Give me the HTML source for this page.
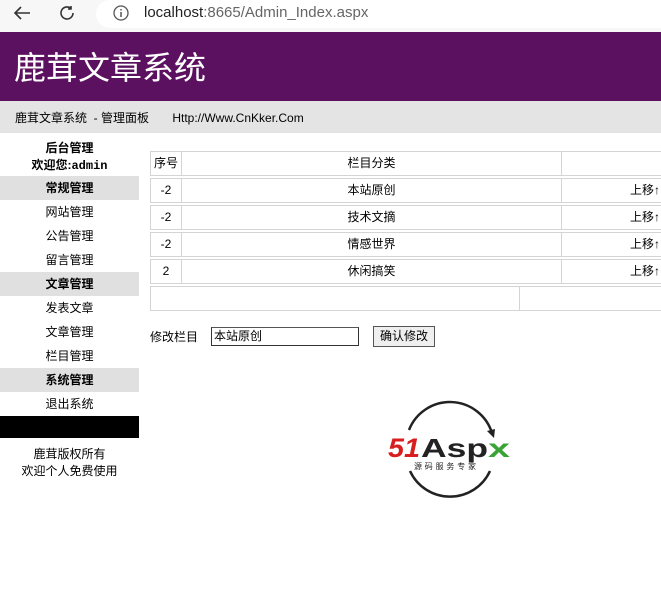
<!DOCTYPE html>
<html><head><meta charset="utf-8"><style>
*{margin:0;padding:0;box-sizing:border-box}
body{width:661px;height:609px;overflow:hidden;background:#fff;font-family:"Liberation Sans","Noto Sans CJK SC",sans-serif;font-size:12px;color:#000;position:relative}
.a{position:absolute}
.cell{position:absolute;border:1px solid #d4d4d4;height:25px;line-height:23px}
.sb{position:absolute;left:0;width:139px;text-align:center;height:24px;line-height:24px}
.g{background:#e0e0e0;font-weight:bold}
</style></head><body>
<div class="a" style="left:0;top:0;width:661px;height:32px;background:#f7f7f7"></div>
<div class="a" style="left:96px;top:0;width:565px;height:28px;background:#fff;border-radius:14px 0 0 14px"></div>
<svg class="a" style="left:12px;top:4px" width="20" height="18"><path d="M18 9H3M9 3L3 9l6 6" stroke="#333" stroke-width="1.6" fill="none"/></svg>
<svg class="a" style="left:58px;top:4px" width="18" height="18"><path d="M15 9a6 6 0 1 1-2-4.5M13 2v3h-3" stroke="#333" stroke-width="1.6" fill="none"/></svg>
<svg class="a" style="left:112px;top:4px" width="18" height="18"><circle cx="9" cy="9" r="7" stroke="#555" stroke-width="1.3" fill="none"/><path d="M9 8v5M9 5v1.5" stroke="#555" stroke-width="1.5"/></svg>
<div class="a" style="left:144px;top:4px;font-size:15px;color:#222">localhost<span style="color:#666">:8665/Admin_Index.aspx</span></div>
<div class="a" style="left:0;top:32px;width:661px;height:69px;background:#5c1160"></div>
<div class="a" style="left:14px;top:49px;font-size:32px;color:#fff;line-height:38px">鹿茸文章系统</div>
<div class="a" style="left:0;top:101px;width:661px;height:32px;background:#e4e4e4"></div>
<div class="a" style="left:15px;top:109px;font-size:12px">鹿茸文章系统 &nbsp;- 管理面板 &nbsp; &nbsp; &nbsp; Http://Www.CnKker.Com</div>

<div class="sb" style="top:138px;height:20px;line-height:20px;font-weight:bold">后台管理</div>
<div class="sb" style="top:155px;height:20px;line-height:20px;font-weight:bold">欢迎您:<span style="font-family:'Liberation Mono',monospace">admin</span></div>
<div class="sb g" style="top:176px">常规管理</div>
<div class="sb" style="top:200px">网站管理</div>
<div class="sb" style="top:224px">公告管理</div>
<div class="sb" style="top:248px">留言管理</div>
<div class="sb g" style="top:272px">文章管理</div>
<div class="sb" style="top:296px">发表文章</div>
<div class="sb" style="top:320px">文章管理</div>
<div class="sb" style="top:344px">栏目管理</div>
<div class="sb g" style="top:368px">系统管理</div>
<div class="sb" style="top:392px">退出系统</div>
<div class="a" style="left:0;top:416px;width:139px;height:22px;background:#000"></div>
<div class="sb" style="top:446px;height:17px;line-height:17px">鹿茸版权所有</div>
<div class="sb" style="top:463px;height:17px;line-height:17px">欢迎个人免费使用</div>

<div class="cell" style="left:150px;top:151px;width:32px;text-align:center">序号</div>
<div class="cell" style="left:181px;top:151px;width:381px;text-align:center">栏目分类</div>
<div class="cell" style="left:561px;top:151px;width:110px"></div>

<div class="cell" style="left:150px;top:178px;width:32px;text-align:center">-2</div>
<div class="cell" style="left:181px;top:178px;width:381px;text-align:center">本站原创</div>
<div class="cell" style="left:561px;top:178px;width:110px;text-align:right;padding-right:10px">上移↑</div>
<div class="cell" style="left:150px;top:205px;width:32px;text-align:center">-2</div>
<div class="cell" style="left:181px;top:205px;width:381px;text-align:center">技术文摘</div>
<div class="cell" style="left:561px;top:205px;width:110px;text-align:right;padding-right:10px">上移↑</div>
<div class="cell" style="left:150px;top:232px;width:32px;text-align:center">-2</div>
<div class="cell" style="left:181px;top:232px;width:381px;text-align:center">情感世界</div>
<div class="cell" style="left:561px;top:232px;width:110px;text-align:right;padding-right:10px">上移↑</div>
<div class="cell" style="left:150px;top:259px;width:32px;text-align:center">2</div>
<div class="cell" style="left:181px;top:259px;width:381px;text-align:center">休闲搞笑</div>
<div class="cell" style="left:561px;top:259px;width:110px;text-align:right;padding-right:10px">上移↑</div>
<div class="cell" style="left:150px;top:286px;width:370px;height:25px"></div>
<div class="cell" style="left:519px;top:286px;width:152px;height:25px"></div>

<div class="a" style="left:150px;top:328px">修改栏目</div>
<div class="a" style="left:211px;top:327px;width:148px;height:19px;border:1px solid #333;border-top-color:#555;padding-left:2px;line-height:17px">本站原创</div>
<div class="a" style="left:373px;top:326px;width:62px;height:21px;border:1px solid #555;background:#efefef;text-align:center;line-height:19px">确认修改</div>

<svg class="a" style="left:380px;top:395px" width="140" height="105">
<path d="M29 35 A44 44 0 0 1 112 38" stroke="#222" stroke-width="2.5" fill="none"/>
<path d="M107 36 l7 7 l1-9z" fill="#222"/>
<path d="M30 76 A44 44 0 0 0 110 76" stroke="#222" stroke-width="2.5" fill="none"/>
<text x="8" y="62" font-family="Liberation Sans" font-style="italic" font-weight="bold" font-size="27" fill="#d81e1e" textLength="32" lengthAdjust="spacingAndGlyphs">51</text>
<text x="41" y="62" font-family="Liberation Sans" font-weight="bold" font-size="26" fill="#222" textLength="67" lengthAdjust="spacingAndGlyphs">Asp</text>
<text x="108" y="62" font-family="Liberation Sans" font-weight="bold" font-size="26" fill="#3aa335" textLength="22" lengthAdjust="spacingAndGlyphs">x</text>
<text x="34" y="74" font-family="Noto Sans CJK SC" font-size="8" fill="#222" textLength="62">源码服务专家</text>
</svg>
</body></html>
